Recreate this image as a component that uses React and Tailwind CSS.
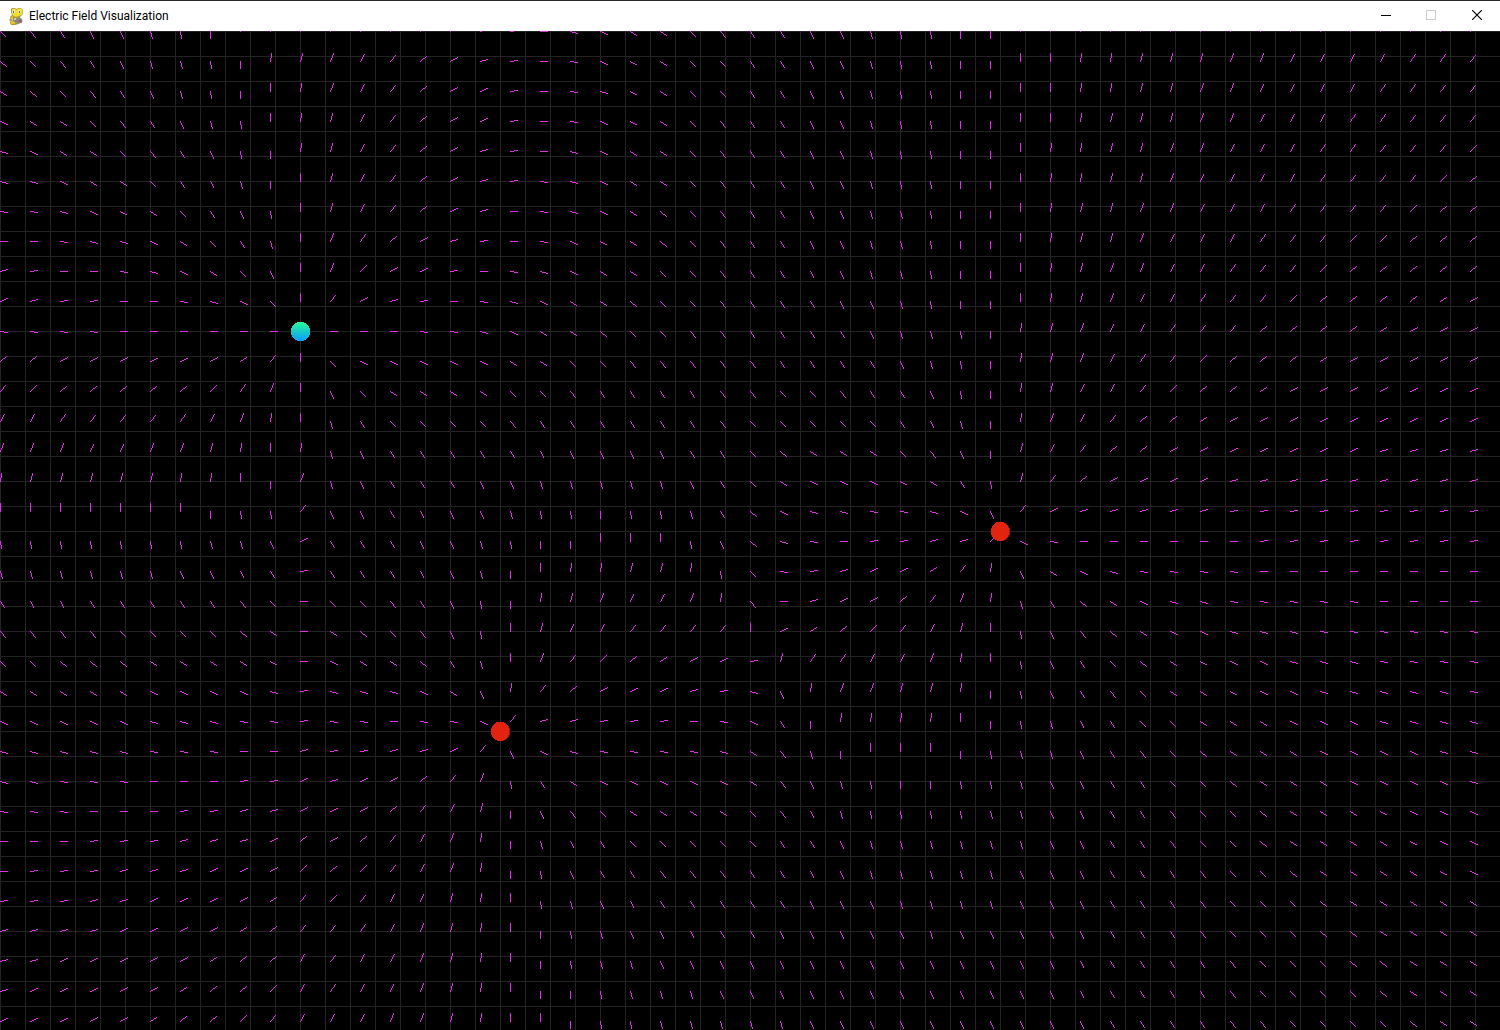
const WIDTH = 1500;
const HEIGHT = 1000;
const GRID_STEP = 25;
const FIELD_STEP = 30;
const ARM = 8;

const charges = [
  { x: 300, y: 300, q: -4 },
  { x: 500, y: 700, q: 7 },
  { x: 1000, y: 500, q: 6 },
];

function fieldAt(x, y) {
  let ex = 0;
  let ey = 0;
  for (const c of charges) {
    const dx = x - c.x;
    const dy = y - c.y;
    const r = Math.hypot(dx, dy);
    if (r === 0) return null;
    const sx = dy === 0 ? Math.abs(dx) : dx;
    const sy = dx === 0 ? -Math.abs(dy) : dy;
    ex += (c.q * sx) / r ** 3;
    ey += (c.q * sy) / r ** 3;
  }
  return [ex, ey];
}

// One short unantialiased stroke, as a run of unit cells.
function strokeCells(x, y) {
  const e = fieldAt(x, y);
  if (!e) return "";
  const angle = Math.atan(e[1] / e[0]);
  const dx = Math.floor(ARM * Math.cos(angle));
  const dy = Math.floor(ARM * Math.sin(angle));
  const n = Math.max(Math.abs(dx), Math.abs(dy));
  let d = "";
  for (let k = 0; k <= n; k++) {
    const px = x + Math.round((k * dx) / n);
    const py = y + Math.sign(dy) * Math.round((k * Math.abs(dy)) / n);
    d += `M${px} ${py}h1v1h-1z`;
  }
  return d;
}

let fieldPath = "";
for (let x = 0; x < WIDTH; x += FIELD_STEP) {
  for (let y = 0; y < HEIGHT; y += FIELD_STEP) fieldPath += strokeCells(x, y);
}

let gridPath = "";
for (let x = 0; x < WIDTH; x += GRID_STEP) gridPath += `M${x} 0h1v${HEIGHT}h-1z`;
for (let y = 0; y < HEIGHT; y += GRID_STEP) gridPath += `M0 ${y}h${WIDTH}v1h-${WIDTH}z`;

function Charge({ x, y, q }) {
  if (q < 0) return <circle cx={x + 0.5} cy={y + 0.5} r="9.7" fill="url(#negative)" />;
  return (
    <g>
      <circle cx={x + 0.5} cy={y + 0.5} r="9.7" fill="#961c12" />
      <ellipse cx={x} cy={y + 0.5} rx="9.2" ry="9.7" fill="#e1230f" />
    </g>
  );
}

function SnakeIcon() {
  return (
    <svg width="16" height="18" viewBox="0 0 16 18" aria-hidden="true">
      <path d="M4 1h3l1.500 1L10 1h3l2 2v3l-1 2-2 2 1 3-2 4-4 1H3l-1-2v-6l2-2-1-3V2z" fill="#a8983a" />
      <path d="M4 2l3-.5L8.500 3 10 1.500h3L14.500 3v3L13 8l-3 1.500H6L4 7z" fill="#f2df2c" />
      <path d="M2.500 10.500L5 9l2 3v5H3l-.8-2z" fill="#e3c52b" />
      <path d="M4 3h3v3H4zM10 3h3v3h-3z" fill="#e9e7b4" />
      <path d="M5 4h1v2H5zM11 4h1v2h-1z" fill="#6d6a4c" />
      <path d="M5 10l3 2 5-1 1.500 2-.5 3-4 .5L5 14z" fill="#85878a" />
      <path d="M6 11h2v2H6z" fill="#c9cbd0" />
      <path d="M1.500 12h2v2h-2z" fill="#8d8f92" />
      <path d="M11 13h2v2h-2z" fill="#bb4a4a" />
    </svg>
  );
}

export default function App() {
  return (
    <div className="flex h-screen w-full flex-col overflow-hidden bg-black">
      <header className="flex h-[31px] shrink-0 items-stretch justify-between border-t border-[#2b2b2b] bg-white">
        <div className="flex items-center gap-1 pl-2">
          <SnakeIcon />
          <h1 className="pl-px font-[Roboto,sans-serif] text-[12px] leading-4 text-black">
            Electric Field Visualization
          </h1>
        </div>
        <div className="flex">
          <button type="button" aria-label="Minimize" className="flex w-[46px] items-center justify-center pb-0.5">
            <svg width="10" height="10" shapeRendering="crispEdges" className="overflow-visible">
              <path d="M1 5h10v1H1z" fill="#000" />
            </svg>
          </button>
          <button type="button" aria-label="Maximize" disabled className="flex w-[46px] items-center justify-center pb-0.5">
            <svg width="10" height="10" shapeRendering="crispEdges">
              <path d="M.5 .5h9v9h-9z" fill="none" stroke="#ccc" />
            </svg>
          </button>
          <button type="button" aria-label="Close" className="flex w-[46px] items-center justify-center pb-0.5">
            <svg width="10" height="10">
              <path d="M0 0l10 10M10 0L0 10" stroke="#000" strokeWidth="1.200" />
            </svg>
          </button>
        </div>
      </header>
      <main className="min-h-0 flex-1 overflow-hidden">
        <svg width={WIDTH} height={HEIGHT} shapeRendering="crispEdges" role="img" aria-label="Electric field">
          <defs>
            <linearGradient id="negative" x1="0" y1="0" x2="0" y2="1">
              <stop offset="0" stopColor="#28fa96" />
              <stop offset="1" stopColor="#0a9bff" />
            </linearGradient>
          </defs>
          <path d={gridPath} fill="#232323" />
          <path d={fieldPath} fill="#e030e8" />
          {charges.map((c) => (
            <Charge key={`${c.x}-${c.y}`} {...c} />
          ))}
        </svg>
      </main>
    </div>
  );
}
